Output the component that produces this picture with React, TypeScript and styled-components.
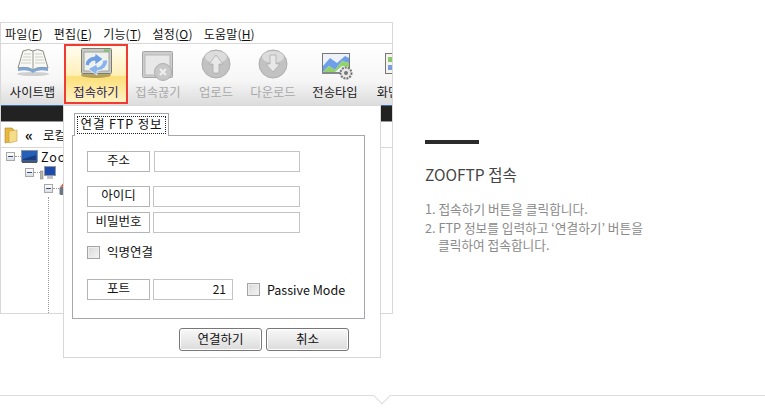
import styled, { createGlobalStyle } from "styled-components";

const Global = createGlobalStyle`
  html, body { margin: 0; padding: 0; background: #fff; }
  body { font-family: "Noto Sans CJK KR", "Liberation Sans", sans-serif; }
  * { box-sizing: border-box; }
`;

const Page = styled.div`
  position: relative;
  width: 765px;
  height: 415px;
  overflow: hidden;
  display: flex;
  align-items: flex-start;
  background: #fff;
`;

const Shot = styled.div`
  position: relative;
  flex: none;
  width: 393px;
  height: 292px;
  margin-top: 22px;
`;

const Frame = styled.div`
  height: 100%;
  border: 1px solid #d8d8d8;
  overflow: hidden;
  display: flex;
  flex-direction: column;
`;

const MenuBar = styled.div`
  height: 21px;
  flex: none;
  display: flex;
  align-items: center;
  gap: 11px;
  padding-left: 4px;
  font-size: 12px;
  letter-spacing: 0.2px;
  color: #111;
  border-bottom: 1px solid #d8d8d8;
  white-space: nowrap;
  u { text-underline-offset: 1px; }
`;

const ToolBar = styled.div`
  height: 61px;
  flex: none;
  display: flex;
  background: linear-gradient(#fff 0%, #f6f6f6 60%, #dcdcdc 100%);
`;

const Tool = styled.div<{ $width: number; $active?: boolean; $off?: boolean }>`
  flex: none;
  width: ${(p) => p.$width}px;
  height: 60px;
  display: flex;
  flex-direction: column;
  align-items: center;
  font-size: 12.3px;
  white-space: nowrap;
  color: ${(p) => (p.$off ? "#a8a8a8" : p.$active ? "#1c2060" : "#222")};
  border: ${(p) => (p.$active ? "2px solid #f03a32" : "2px solid transparent")};
  background: ${(p) =>
    p.$active
      ? "linear-gradient(#fffdf0 0%, #fff0b8 52%, #fddf78 55%, #fff3c4 100%)"
      : "none"};
  svg { flex: none; }
  span { margin-top: 2px; line-height: 17px; }
`;

const DarkBar = styled.div`
  height: 17px;
  flex: none;
  background: #222;
  border-top: 1px solid #3a6ea8;
  border-bottom: 1px solid #999;
`;

const PathBar = styled.div`
  height: 26px;
  flex: none;
  display: flex;
  align-items: center;
  gap: 7px;
  padding-left: 3px;
  font-size: 12.5px;
  color: #111;
  border-bottom: 1px solid #d8d8d8;
`;

const Chevrons = styled.span`
  font-size: 15px;
  font-weight: 700;
  line-height: 1;
  margin-right: 3px;
`;

const Tree = styled.div`
  padding-top: 1px;
  display: flex;
  flex-direction: column;
  gap: 1px;
`;

const TreeRow = styled.div<{ $depth: number }>`
  height: 15px;
  display: flex;
  align-items: center;
  padding-left: ${(p) => 5 + p.$depth * 19}px;
  font-size: 12.5px;
  letter-spacing: 1px;
  color: #111;
  svg { flex: none; margin-right: 3px; }
`;

const Expander = styled.i`
  width: 9px;
  height: 9px;
  flex: none;
  border: 1px solid #a8a8a8;
  background: linear-gradient(#fff, #dedede);
  display: flex;
  align-items: center;
  justify-content: center;
  &::after {
    content: "";
    width: 5px;
    height: 1px;
    background: #33508c;
  }
`;

const Dots = styled.i`
  width: 6px;
  flex: none;
  border-top: 1px dotted #999;
`;

const Stem = styled.div`
  width: 1px;
  height: 130px;
  margin-left: 47px;
  border-left: 1px dotted #999;
`;

const Dialog = styled.div`
  position: absolute;
  left: 63px;
  top: 83px;
  width: 318px;
  height: 253px;
  background: #fff;
  border: 1px solid #d8d8d8;
  padding: 7px 15px 0 8px;
  font-size: 12.5px;
  color: #111;
`;

const Tab = styled.div`
  position: relative;
  z-index: 1;
  width: 95px;
  height: 23px;
  margin-left: 2px;
  padding: 2px;
  background: #fff;
  border: 1px solid #a6a6ae;
  border-bottom: none;
  div {
    height: 18px;
    border: 1px dotted #222;
    text-align: center;
    font-size: 12.5px;
    letter-spacing: 0.9px;
    line-height: 14px;
    white-space: nowrap;
  }
`;

const TabPanel = styled.div`
  height: 184px;
  margin-top: -1px;
  border: 1px solid #a6a6ae;
  padding: 15px 0 0 14px;
`;

const Field = styled.div<{ $gap: number; $top?: number }>`
  display: flex;
  align-items: stretch;
  gap: ${(p) => p.$gap}px;
  height: 21px;
  margin-top: ${(p) => p.$top ?? 0}px;
`;

const FieldLabel = styled.div`
  flex: none;
  width: 63px;
  border: 1px solid #b4b4b4;
  text-align: center;
  font-size: 12.5px;
  line-height: 16px;
`;

const FieldInput = styled.div<{ $width: number }>`
  flex: none;
  width: ${(p) => p.$width}px;
  border: 1px solid #c4c4c4;
  text-align: right;
  padding-right: 6px;
  font-size: 12px;
  line-height: 18px;
`;

const Check = styled.i`
  display: block;
  flex: none;
  width: 13px;
  height: 13px;
  border: 1px solid #a4a4a4;
  background: linear-gradient(135deg, #d8d8d8, #f4f4f4);
  box-shadow: inset 0 0 0 1px #eee;
`;

const CheckRow = styled.div<{ $gap: number; $top?: number; $left?: number }>`
  display: flex;
  align-items: center;
  gap: ${(p) => p.$gap}px;
  margin-top: ${(p) => p.$top ?? 0}px;
  margin-left: ${(p) => p.$left ?? 0}px;
  font-size: 12.5px;
  line-height: 16px;
  white-space: nowrap;
`;

const Buttons = styled.div`
  display: flex;
  justify-content: flex-end;
  gap: 4px;
  margin-top: 9px;
  padding-right: 16px;
`;

const Button = styled.div`
  width: 83px;
  height: 23px;
  border: 1px solid #777;
  border-radius: 3px;
  background: linear-gradient(#f8f8f8, #dcdcdc);
  box-shadow: inset 0 0 0 1px #fff;
  text-align: center;
  font-size: 12.5px;
  line-height: 19px;
`;

const Intro = styled.div`
  margin: 140px 0 0 32px;
  width: 222px;
`;

const Rule = styled.div`
  width: 54px;
  height: 4px;
  background: #2b2b2b;
`;

const Heading = styled.h3`
  margin: 20px 0 0;
  font-size: 15.5px;
  font-weight: 400;
  line-height: 20px;
  color: #444;
  white-space: nowrap;
`;

const Steps = styled.ol`
  list-style: none;
  margin: 16px 0 0;
  padding: 0;
  font-size: 12.7px;
  line-height: 17px;
  color: #8a8a8a;
  word-break: keep-all;
  li { padding-left: 13px; text-indent: -13px; margin-bottom: 2px; }
`;

const BottomLine = styled.div`
  position: absolute;
  left: 0;
  right: 0;
  top: 395px;
  height: 1px;
  background: #ddd;
`;

const Notch = styled.div`
  position: absolute;
  left: 376px;
  top: 390px;
  width: 12px;
  height: 12px;
  background: #fff;
  border-right: 1px solid #ddd;
  border-bottom: 1px solid #ddd;
  transform: rotate(45deg);
`;

const BookIcon = () => (
  <svg width="50" height="36" viewBox="0 0 50 36">
    <ellipse cx="25" cy="28" rx="16" ry="2" fill="#cfcfcf" />
    <path d="M10 22 L15 5 Q21 2 25 5 Q29 2 35 5 L40 22 Q30 20 25 24 Q20 20 10 22Z" fill="#f8f8f4" stroke="#8a8a82" />
    <path d="M25 5V24" stroke="#9a9a92" />
    <path d="M16 8h7M15 11h8M14 14h9M13 17h10M27 8h7M27 11h8M27 14h9M27 17h10" stroke="#cfcfc8" fill="none" />
    <path d="M10 22 Q20 20 25 24 Q30 20 40 22 V25 Q30 23 25 27 Q20 23 10 25Z" fill="#7ea6d4" />
  </svg>
);

const ConnectIcon = () => (
  <svg width="50" height="36" viewBox="0 0 50 36">
    <ellipse cx="25" cy="29" rx="15" ry="3" fill="#8c7c3c" opacity="0.65" />
    <rect x="10.5" y="2.5" width="30" height="25" rx="1" fill="#c8ccc8" stroke="#7c7c74" />
    <rect x="13" y="6" width="25" height="19" fill="#eef0ea" stroke="#a0a098" />
    <rect x="33" y="3.5" width="6" height="2" fill="#7cc070" />
    <path d="M14 19 Q15 11 24 10 L24 7 L32 13 L24 19 L24 15 Q19 15 18 20Z" fill="#6f9fe0" stroke="#fff" strokeWidth="0.7" />
    <path d="M37 14 Q36 24 26 25 L26 29 L17 23 L26 18 L26 21 Q31 21 32 14Z" fill="#8ab4ea" stroke="#fff" strokeWidth="0.7" />
  </svg>
);

const DisconnectIcon = () => (
  <svg width="50" height="36" viewBox="0 0 50 36">
    <rect x="9.5" y="5.5" width="30" height="26" rx="1" fill="#cdcdcd" stroke="#a4a4a4" />
    <rect x="12" y="9" width="25" height="20" fill="#e8e8e8" stroke="#b8b8b8" />
    <circle cx="30" cy="26" r="8.5" fill="#c8c8c8" stroke="#aeaeae" />
    <path d="M27 23l6 6M33 23l-6 6" stroke="#f0f0f0" strokeWidth="2" />
  </svg>
);

const TransferIcon = ({ down }: { down?: boolean }) => (
  <svg width="50" height="36" viewBox="0 0 50 36">
    <circle cx="25" cy="18" r="14" fill="#c2c2c2" stroke="#aeaeae" />
    <ellipse cx="25" cy="11" rx="11" ry="6" fill="#dcdcdc" />
    <path
      d={down ? "M22 9h6v9h4L25 26 18 18h4Z" : "M25 9l7 9h-4v9h-6v-9h-4Z"}
      fill="#e8e8e8"
      stroke="#a8a8a8"
      strokeWidth="0.7"
    />
  </svg>
);

const ChartIcon = () => (
  <svg width="50" height="36" viewBox="0 0 50 36">
    <rect x="12.5" y="7.5" width="27" height="19" fill="#eef2f8" stroke="#77787e" />
    <path d="M13 20 L20 12 L27 17 L35 10 L39 12 V17 L32 15 L25 24 L19 20 L13 26Z" fill="#6f9fe8" />
    <path d="M13 26 L19 20 L25 24 L32 15 L39 17 V21 L32 20 L25 26H13Z" fill="#90d468" />
    <rect x="12" y="26" width="28" height="2" fill="#88888c" />
    <circle cx="36" cy="27" r="5.5" fill="#e8e8e8" stroke="#777" strokeWidth="2" strokeDasharray="2 1" />
    <circle cx="36" cy="27" r="2" fill="#777" />
  </svg>
);

const ScreenIcon = () => (
  <svg width="50" height="36" viewBox="0 0 50 36">
    <rect x="22.5" y="7.5" width="24" height="20" fill="#f4f4ec" stroke="#777" />
    <rect x="25" y="11" width="7" height="5" fill="#8ac46c" />
    <rect x="25" y="19" width="7" height="5" fill="#7c9ce0" />
  </svg>
);

const FolderIcon = () => (
  <svg width="14" height="18" viewBox="0 0 14 18">
    <path d="M1 2h7l2 2v11l-9 2Z" fill="#e8b83c" stroke="#a88428" strokeWidth="0.6" />
    <path d="M5 5l8-1v11l-8 2Z" fill="#f6dc88" stroke="#c4a040" strokeWidth="0.6" />
  </svg>
);

const ComputerIcon = () => (
  <svg width="17" height="14" viewBox="0 0 17 14">
    <rect x="0.5" y="0.5" width="16" height="11" fill="#2460b8" stroke="#8a94a4" />
    <path d="M2 9 L15 5 V10 H2Z" fill="#1a3c80" />
    <rect x="1" y="11" width="15" height="2" fill="#555" />
  </svg>
);

const MonitorIcon = () => (
  <svg width="16" height="14" viewBox="0 0 16 14">
    <rect x="0" y="5" width="3" height="8" fill="#b8b8a8" stroke="#777" strokeWidth="0.5" />
    <rect x="4.5" y="0.5" width="11" height="9" fill="#1c4cb0" stroke="#999" />
    <rect x="7" y="10" width="6" height="3" fill="#c4c4c4" />
  </svg>
);

const DriveIcon = () => (
  <svg width="11" height="15" viewBox="0 0 11 15">
    <path d="M1 6 L6 0 L10 5Z" fill="#e05830" />
    <path d="M4 5 L8 1 L10 5Z" fill="#3c78d8" />
    <rect x="0.5" y="6" width="10" height="8" rx="1.5" fill="#6c7684" />
  </svg>
);

export default function App() {
  return (
    <Page>
      <Global />
      <Shot>
        <Frame>
          <MenuBar>
            <span>파일(<u>F</u>)</span>
            <span>편집(<u>E</u>)</span>
            <span>기능(<u>T</u>)</span>
            <span>설정(<u>O</u>)</span>
            <span>도움말(<u>H</u>)</span>
          </MenuBar>
          <ToolBar>
            <Tool $width={63}>
              <BookIcon />
              <span>사이트맵</span>
            </Tool>
            <Tool $width={64} $active>
              <ConnectIcon />
              <span>접속하기</span>
            </Tool>
            <Tool $width={60} $off>
              <DisconnectIcon />
              <span>접속끊기</span>
            </Tool>
            <Tool $width={56} $off>
              <TransferIcon />
              <span>업로드</span>
            </Tool>
            <Tool $width={58} $off>
              <TransferIcon down />
              <span>다운로드</span>
            </Tool>
            <Tool $width={66}>
              <ChartIcon />
              <span>전송타입</span>
            </Tool>
            <Tool $width={40}>
              <ScreenIcon />
              <span>화면</span>
            </Tool>
          </ToolBar>
          <DarkBar />
          <PathBar>
            <FolderIcon />
            <Chevrons>«</Chevrons>
            <span>로컬</span>
          </PathBar>
          <Tree>
            <TreeRow $depth={0}>
              <Expander />
              <Dots />
              <ComputerIcon />
              <span>Zoo</span>
            </TreeRow>
            <TreeRow $depth={1}>
              <Expander />
              <Dots />
              <MonitorIcon />
            </TreeRow>
            <TreeRow $depth={2}>
              <Expander />
              <Dots />
              <DriveIcon />
            </TreeRow>
            <Stem />
          </Tree>
        </Frame>
        <Dialog>
          <Tab>
            <div>연결 FTP 정보</div>
          </Tab>
          <TabPanel>
            <Field $gap={4}>
              <FieldLabel>주소</FieldLabel>
              <FieldInput $width={146} />
            </Field>
            <Field $gap={3} $top={14}>
              <FieldLabel>아이디</FieldLabel>
              <FieldInput $width={147} />
            </Field>
            <Field $gap={3} $top={5}>
              <FieldLabel>비밀번호</FieldLabel>
              <FieldInput $width={147} />
            </Field>
            <CheckRow $gap={7} $top={11}>
              <Check />
              <span>익명연결</span>
            </CheckRow>
            <Field $gap={3} $top={19}>
              <FieldLabel>포트</FieldLabel>
              <FieldInput $width={80}>21</FieldInput>
              <CheckRow $gap={7} $left={11}>
                <Check />
                <span>Passive Mode</span>
              </CheckRow>
            </Field>
          </TabPanel>
          <Buttons>
            <Button>연결하기</Button>
            <Button>취소</Button>
          </Buttons>
        </Dialog>
      </Shot>
      <Intro>
        <Rule />
        <Heading>ZOOFTP 접속</Heading>
        <Steps>
          <li>1. 접속하기 버튼을 클릭합니다.</li>
          <li>2. FTP 정보를 입력하고 ‘연결하기’ 버튼을 클릭하여 접속합니다.</li>
        </Steps>
      </Intro>
      <BottomLine />
      <Notch />
    </Page>
  );
}
